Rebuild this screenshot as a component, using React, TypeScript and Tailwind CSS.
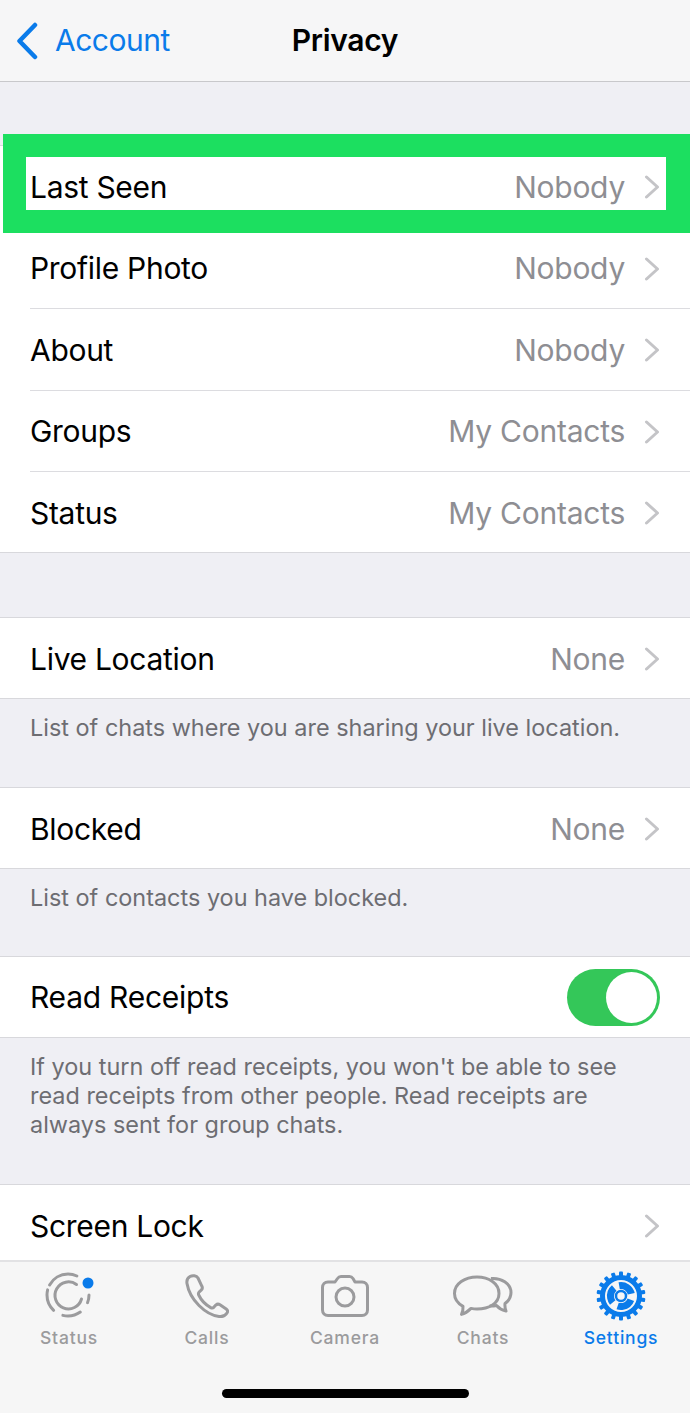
const Chevron = () => (
  <svg width="16" height="24" viewBox="0 0 16 24" fill="none" className="ml-[19px] shrink-0 text-[#c4c4c7]">
    <path d="M2.5 2l11 10-11 10" stroke="currentColor" strokeWidth="3" strokeLinecap="round" strokeLinejoin="round" />
  </svg>
);

function Row({ label, value, last }: { label: string; value?: string; last?: boolean }) {
  return (
    <div className="pl-[30px] bg-white">
      <div className={`flex items-center pt-[2px] pr-[30px] ${last ? 'h-[80px]' : 'h-[81.5px] border-b border-[#dcdce0]'}`}>
        <span className="flex-1 text-[30px] tracking-[-0.3px] text-black">{label}</span>
        {value && <span className="text-[30px] tracking-[-0.25px] text-[#8e8e93]">{value}</span>}
        <Chevron />
      </div>
    </div>
  );
}

function Group({ children }: { children: React.ReactNode }) {
  return <div className="border-y border-[#d8d8dc] bg-white">{children}</div>;
}

const Footer = ({ children, box }: { children: React.ReactNode; box: string }) => (
  <p className={`px-[30px] text-[23.45px] leading-[29px] text-[#6d6d72] ${box}`}>{children}</p>
);

const StatusIcon = () => (
  <svg width="52" height="48" viewBox="0 0 52 48" fill="none" stroke="#9b9b9d" strokeWidth="3" strokeLinecap="round">
    <circle cx="25" cy="23" r="21" pathLength={100} strokeDasharray="6 9 14 8 17 4 24 18" />
    <path d="M33.500 12.500A13.500 13.500 0 1 0 38.500 27" />
    <circle cx="45" cy="11" r="5.500" fill="#0a7bea" stroke="none" />
  </svg>
);

const CallsIcon = () => (
  <svg width="44" height="44" viewBox="0 0 44 44" fill="none" stroke="#9b9b9d" strokeWidth="3" strokeLinejoin="round">
    <path d="M5 2.500c-2.500 1.500-3.500 4-3 7 1.500 9 6 16 12 22 6 6 12 10 20 11 3.500.5 6.500-1 8-3.500 1-1.500.5-3-.8-4l-6.200-4.200c-1.500-1-3-.8-4.200.3l-1.800 2c-1 1-2.200 1.100-3.300.5-5-2.800-9.500-7.300-12-12.600-.5-1.200-.3-2.300.6-3.200l1.900-1.700c1.200-1.100 1.400-2.600.6-4L13 4c-1.500-2.500-5.500-3-8-1.500z" />
  </svg>
);

const CameraIcon = () => (
  <svg width="48" height="42" viewBox="0 0 48 42" fill="none" stroke="#9b9b9d" strokeWidth="3" strokeLinejoin="round">
    <path d="M7 7h7l2.500-3.500c.8-1.200 1.800-2 3.500-2h8.500c1.700 0 2.700.8 3.500 2L34 7h7c3.300 0 5.500 2.200 5.500 5.500V35c0 3.300-2.200 5.500-5.500 5.500H7c-3.300 0-5.500-2.200-5.500-5.500V12.500C1.500 9.200 3.700 7 7 7z" />
    <circle cx="24" cy="22" r="9" />
  </svg>
);

const ChatsIcon = () => (
  <svg width="60" height="42" viewBox="0 0 60 42" fill="none" stroke="#9b9b9d" strokeWidth="3" strokeLinejoin="round">
    <path d="M24 2c12 0 22 6.500 22 16.500S36 34 24 34c-2 0-4-.2-6-.6-2.500 2.500-5.500 5-9.500 6 1-2 1.800-4.500 1.500-8C5 28.500 1.500 24 1.500 18.500 1.500 8.500 12 2 24 2z" />
    <path d="M38 3.500c10-1 20 5 20 14 0 5-2.500 8.500-6 11-.3 3 .2 5.500 1 7.500-3.500-.8-7-2.500-9.500-5.500-2.500.5-4.500.6-7 .5" />
  </svg>
);

const SettingsIcon = () => {
  const teeth = Array.from({ length: 18 }, (_, i) => i * 20);
  return (
    <svg width="50" height="50" viewBox="0 0 50 50" fill="none">
      {teeth.map((deg) => (
        <rect key={deg} x="23" y="0.500" width="4" height="7" rx="1" fill="#0a7bea" transform={`rotate(${deg} 25 25)`} />
      ))}
      <circle cx="25" cy="25" r="18.500" stroke="#0a7bea" strokeWidth="5" fill="#f6f6f6" />
      {/* three blades, the gaps between them read as the spokes */}
      <circle cx="25" cy="25" r="10.500" stroke="#0a7bea" strokeWidth="7" strokeDasharray="16 6" transform="rotate(-100 25 25)" />
      <circle cx="25" cy="25" r="5" fill="#f6f6f6" stroke="#0a7bea" strokeWidth="2.500" />
    </svg>
  );
};

function Tab({ icon, label, active }: { icon: React.ReactNode; label: string; active?: boolean }) {
  return (
    <div className="flex flex-col items-center">
      <div className="flex items-center justify-center h-[50px]">{icon}</div>
      <span className={`mt-[6px] text-[17.5px] leading-[22px] font-medium tracking-[0.8px] ${active ? 'text-[#0a7bea]' : 'text-[#9b9b9d]'}`}>
        {label}
      </span>
    </div>
  );
}

export default function App() {
  return (
    <div className="flex flex-col h-[1413px] overflow-hidden bg-[#efeff4] font-['Inter','Liberation_Sans',sans-serif]">
      {/* nav bar */}
      <div className="grid grid-cols-3 items-center h-[82px] shrink-0 px-[16px] bg-[#f6f6f7] border-b border-[#c8c8cb]">
        <div className="flex items-center gap-[17px] text-[#0a7bea]">
          <svg width="22" height="38" viewBox="0 0 22 38" fill="none">
            <path d="M19 3L3.500 19 19 35" stroke="currentColor" strokeWidth="4.500" strokeLinecap="round" strokeLinejoin="round" />
          </svg>
          <span className="text-[30px] tracking-[-0.5px]">Account</span>
        </div>
        <span className="text-center text-[30px] font-semibold tracking-[-0.3px] text-black">Privacy</span>
      </div>

      <div className="flex-1 min-h-0 overflow-hidden">
        <div className="h-[63px]" />

        <Group>
          <div className="relative">
            <Row label="Last Seen" value="Nobody" />
            {/* green highlight drawn over the row */}
            <div className="absolute left-[3px] right-0 top-[-12px] h-[99px] border-y-[23px] border-l-[23px] border-r-[24px] border-[#1cdf60]" />
          </div>
          <Row label="Profile Photo" value="Nobody" />
          <Row label="About" value="Nobody" />
          <Row label="Groups" value="My Contacts" />
          <Row label="Status" value="My Contacts" last />
        </Group>

        <div className="h-[64px]" />

        <Group>
          <Row label="Live Location" value="None" last />
        </Group>
        <Footer box="pt-[14px] h-[88px]">List of chats where you are sharing your live location.</Footer>

        <Group>
          <Row label="Blocked" value="None" last />
        </Group>
        <Footer box="pt-[14px] h-[87px]">List of contacts you have blocked.</Footer>

        <div className="border-y border-[#d8d8dc] bg-white pl-[30px] pr-[30px] flex items-center justify-between h-[82px]">
          <span className="text-[30px] tracking-[-0.25px] text-black">Read Receipts</span>
          <div className="flex items-center justify-end w-[93px] h-[57px] pr-[3px] rounded-full bg-[#34c759]">
            <div className="w-[51px] h-[51px] rounded-full bg-white" />
          </div>
        </div>
        <Footer box="pt-[14px] h-[146px]">
          If you turn off read receipts, you won't be able to see read receipts from other people. Read receipts are always sent for group chats.
        </Footer>

        <Group>
          <Row label="Screen Lock" last />
        </Group>
      </div>

      {/* tab bar */}
      <div className="relative h-[153px] shrink-0 bg-[#f6f6f6] border-t-2 border-[#e2e2e4]">
        <div className="grid grid-cols-5 pt-[9px]">
          <Tab icon={<StatusIcon />} label="Status" />
          <Tab icon={<CallsIcon />} label="Calls" />
          <Tab icon={<CameraIcon />} label="Camera" />
          <Tab icon={<ChatsIcon />} label="Chats" />
          <Tab icon={<SettingsIcon />} label="Settings" active />
        </div>
        <div className="absolute left-[222px] bottom-[15px] w-[247px] h-[9px] rounded-full bg-black" />
      </div>
    </div>
  );
}
